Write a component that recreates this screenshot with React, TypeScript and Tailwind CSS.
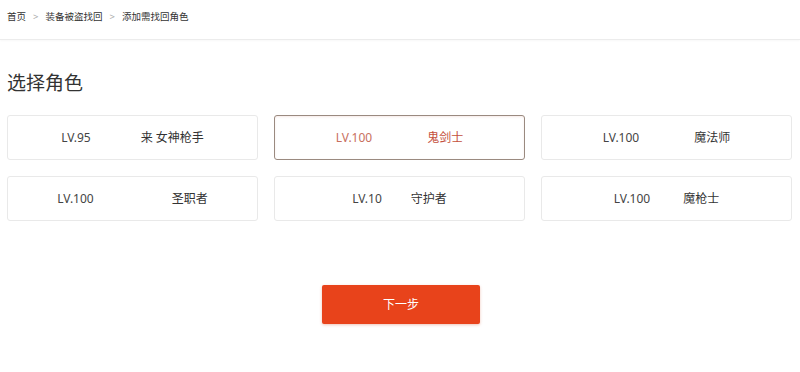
import React, { useState } from 'react';

interface Role {
  level: string;
  name: string;
  gap: string;
}

const roles: Role[] = [
  { level: 'LV.95', name: '来 女神枪手', gap: 'gap-[50px]' },
  { level: 'LV.100', name: '鬼剑士', gap: 'gap-[55px]' },
  { level: 'LV.100', name: '魔法师', gap: 'gap-[55px]' },
  { level: 'LV.100', name: '圣职者', gap: 'gap-[78px]' },
  { level: 'LV.10', name: '守护者', gap: 'gap-[29px]' },
  { level: 'LV.100', name: '魔枪士', gap: 'gap-[33px]' },
];

export default function App() {
  const [selected, setSelected] = useState(1);

  return (
    <div
      className="w-[800px] h-[372px] bg-white text-[#333]"
      style={{ fontFamily: '"Noto Sans", "Noto Sans CJK SC", sans-serif' }}
    >
      {/* breadcrumb */}
      <div className="h-[40px] border-b border-[#ececec] shadow-[0_1px_2px_rgba(0,0,0,0.03)] flex items-center px-[7px] pb-[4px] text-[9.5px] text-[#333]">
        <span>首页</span>
        <span className="mx-[7px] text-[#aaa]">&gt;</span>
        <span>装备被盗找回</span>
        <span className="mx-[7px] text-[#aaa]">&gt;</span>
        <span>添加需找回角色</span>
      </div>

      <div className="px-[7px]">
        <h1 className="mt-[29px] text-[19px] leading-[28px] text-[#333]">选择角色</h1>

        <div className="mt-[18px] grid grid-cols-3 gap-4 w-[785px]">
          {roles.map((role, i) => {
            const active = i === selected;
            return (
              <button
                key={i}
                onClick={() => setSelected(i)}
                className={`h-[45px] flex items-center justify-center ${role.gap} text-[12px] rounded-[3px] border ${
                  active
                    ? 'border-[#9a8a80] shadow-[inset_0_1px_2px_rgba(200,120,100,0.15)]'
                    : 'border-[#e9e9e9]'
                }`}
              >
                <span className={active ? 'text-[#c8705e]' : 'text-[#444]'}>{role.level}</span>
                <span className={active ? 'text-[#c4503c]' : 'text-[#333]'}>{role.name}</span>
              </button>
            );
          })}
        </div>
      </div>

      <div className="mt-[64px] flex justify-center pl-[2px]">
        <button className="w-[158px] h-[39px] bg-[#e8431b] rounded-[2px] text-white text-[12px] shadow-[0_1px_3px_rgba(200,60,20,0.3)]">
          下一步
        </button>
      </div>
    </div>
  );
}
